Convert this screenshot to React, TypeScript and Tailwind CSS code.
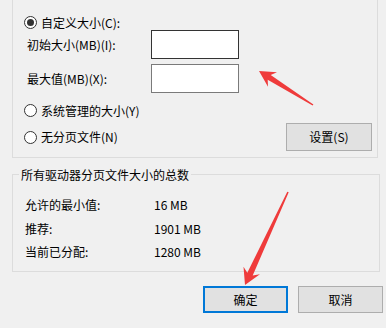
import React from "react";

const font = { fontFamily: '"Noto Sans CJK SC", "Noto Sans", sans-serif' };

function Radio({ checked }: { checked?: boolean }) {
  return (
    <div className="w-[13px] h-[13px] rounded-full border border-[#333] bg-white flex items-center justify-center shrink-0">
      {checked && <div className="w-[7px] h-[7px] rounded-full bg-[#333]" />}
    </div>
  );
}

export default function App() {
  return (
    <div
      className="relative w-[386px] h-[328px] bg-[#f0f0f0] overflow-hidden text-[12px] leading-none text-black"
      style={font}
    >
      {/* upper group */}
      <div className="ml-[12px] w-[366px] h-[158px] border-x border-b border-[#dcdcdc] flex flex-col pl-[11px] pr-[5px] pt-[16px]">
        <div className="flex items-center h-[13px] gap-[4px]">
          <Radio checked />
          <span>自定义大小(C):</span>
        </div>
        <div className="flex items-center mt-[1px] h-[29px]">
          <span className="ml-[3px] w-[124px]">初始大小(MB)(I):</span>
          <div className="w-[88px] h-[29px] bg-white border border-[#333]" />
        </div>
        <div className="flex items-center mt-[5px] h-[29px]">
          <span className="ml-[3px] w-[124px]">最大值(MB)(X):</span>
          <div className="w-[88px] h-[29px] bg-white border border-[#7a7a7a]" />
        </div>
        <div className="flex items-center h-[13px] gap-[4px] mt-[11px]">
          <Radio />
          <span>系统管理的大小(Y)</span>
        </div>
        <div className="flex items-center h-[28px] mt-[6px]">
          <div className="flex items-center gap-[4px]">
            <Radio />
            <span>无分页文件(N)</span>
          </div>
          <div className="ml-auto w-[86px] h-[28px] bg-[#e1e1e1] border border-[#adadad] flex items-center justify-center">
            设置(S)
          </div>
        </div>
      </div>

      {/* lower group */}
      <div className="relative mt-[16px] ml-[12px] w-[368px] h-[98px] border border-[#dcdcdc] flex flex-col pl-[12px] pt-[22px]">
        <div className="absolute left-[6px] top-[-8px] px-[2px] bg-[#f0f0f0] leading-[16px]">
          所有驱动器分页文件大小的总数
        </div>
        <div className="flex items-center h-[16px]">
          <span className="w-[129px]">允许的最小值:</span>
          <span>16 MB</span>
        </div>
        <div className="flex items-center h-[16px] mt-[8px]">
          <span className="w-[129px]">推荐:</span>
          <span>1901 MB</span>
        </div>
        <div className="flex items-center h-[16px] mt-[7px]">
          <span className="w-[129px]">当前已分配:</span>
          <span>1280 MB</span>
        </div>
      </div>

      {/* buttons */}
      <div className="flex justify-end gap-[10px] mt-[14px] pr-[3px]">
        <div className="w-[85px] h-[27px] bg-[#e1e1e1] border-2 border-[#0078d7] flex items-center justify-center">
          确定
        </div>
        <div className="w-[85px] h-[27px] bg-[#e1e1e1] border border-[#adadad] flex items-center justify-center">
          取消
        </div>
      </div>

      {/* annotation arrows */}
      <svg className="absolute left-0 top-0 pointer-events-none" width="386" height="328">
        <polygon
          fill="#ef3b3b"
          points="259,71 277,72.3 270.7,75 313.4,104.4 312.6,105.6 267.7,79.8 268,86.7"
        />
        <polygon
          fill="#ef3b3b"
          points="245,285 243.5,266.7 247.3,272.8 287.3,191.7 288.7,192.3 252.7,275.4 259.9,274.3"
        />
      </svg>
    </div>
  );
}
